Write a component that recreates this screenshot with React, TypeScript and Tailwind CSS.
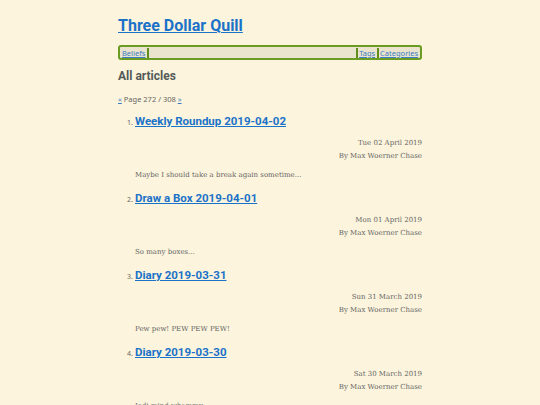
const articles = [
  { title: 'Weekly Roundup 2019-04-02', date: 'Tue 02 April 2019', excerpt: 'Maybe I should take a break again sometime...' },
  { title: 'Draw a Box 2019-04-01', date: 'Mon 01 April 2019', excerpt: 'So many boxes...' },
  { title: 'Diary 2019-03-31', date: 'Sun 31 March 2019', excerpt: 'Pew pew! PEW PEW PEW!' },
  { title: 'Diary 2019-03-30', date: 'Sat 30 March 2019', excerpt: 'Jedi mind whammy...' },
];

const sans = { fontFamily: '"Noto Sans", "Open Sans", sans-serif' };
const heading = { fontFamily: 'Roboto, "Noto Sans", sans-serif' };
const serif = { fontFamily: '"DejaVu Serif", "Liberation Serif", serif' };

function Sep() {
  return <span className="inline-block w-[2px] h-[10px] bg-[#5f8f1a] mx-[1.5px]" />;
}

export default function App() {
  return (
    <div className="min-h-[405px] bg-[#fcf4dc] overflow-hidden">
      <div className="mx-auto w-[304px] pt-[16px]">
        {/* Header */}
        <h1 className="text-[16px] leading-[20px] font-bold text-[#1b72c9] underline" style={heading}>
          Three Dollar Quill
        </h1>

        {/* Nav */}
        <div
          className="mt-[9px] h-[15px] flex items-center border-2 border-[#6a9b22] rounded-[3px] bg-[#eae3cd] px-[2px] text-[7.5px]"
          style={sans}
        >
          <a className="text-[#3b7dc4] underline leading-[10px]">Beliefs</a>
          <Sep />
          <div className="flex-1" />
          <Sep />
          <a className="text-[#3b7dc4] underline leading-[10px]">Tags</a>
          <Sep />
          <a className="text-[#3b7dc4] underline leading-[10px]">Categories</a>
        </div>

        {/* Listing */}
        <h2 className="mt-[8px] text-[12px] leading-[16px] font-bold text-[#535a5a]" style={heading}>
          All articles
        </h2>
        <div className="mt-[9px] text-[7.5px] leading-[12px] text-[#666]" style={sans}>
          <a className="text-[#3b7dc4] underline">«</a> Page 272 / 308{' '}
          <a className="text-[#3b7dc4] underline">»</a>
        </div>

        <ol className="mt-[8px]">
          {articles.map((a, i) => (
            <li key={a.title} className="pb-[9px]">
              <div className="flex items-baseline">
                <span className="w-[17px] pr-[2px] text-right text-[7px] text-[#666]" style={sans}>
                  {i + 1}.
                </span>
                <a className="text-[11.5px] leading-[16px] font-bold text-[#1b72c9] underline" style={heading}>
                  {a.title}
                </a>
              </div>
              <div className="mt-[7.5px] text-right text-[7px] leading-[13px] text-[#666]" style={serif}>
                <div>{a.date}</div>
                <div>By Max Woerner Chase</div>
              </div>
              <p className="mt-[6.5px] pl-[17px] text-[7px] leading-[12px] text-[#666]" style={serif}>
                {a.excerpt}
              </p>
            </li>
          ))}
        </ol>
      </div>
    </div>
  );
}
